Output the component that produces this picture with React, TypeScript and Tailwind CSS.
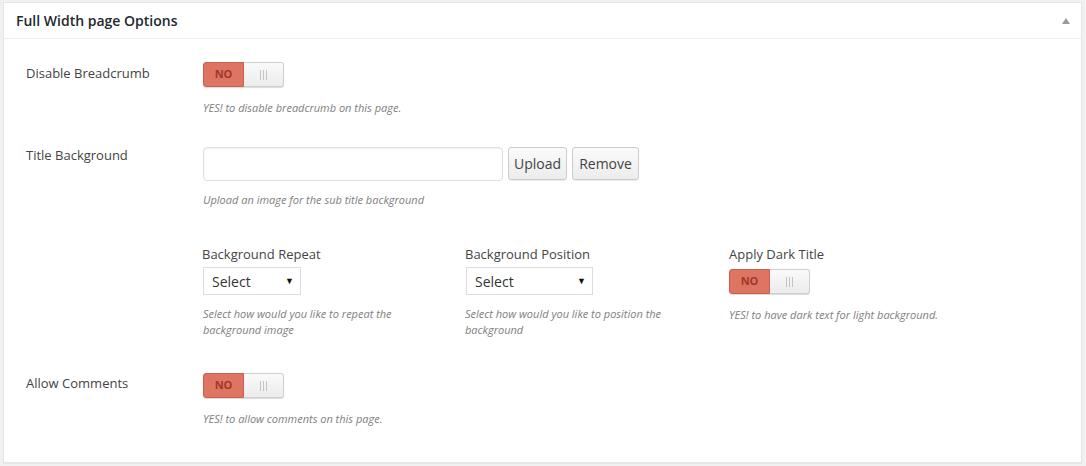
import React from 'react';

const font = { fontFamily: '"Open Sans", "Liberation Sans", sans-serif' };

const Toggle: React.FC = () => (
  <div className="flex h-[25px] w-[81px] rounded-[3px] shadow-[0_1px_1px_rgba(0,0,0,0.15)]">
    <div className="flex w-[41px] items-center justify-center rounded-l-[3px] border border-[#c9604f] bg-[#e07463] text-[11px] font-bold text-[#9c3a2d]">
      NO
    </div>
    <div className="flex flex-1 items-center justify-center gap-[2px] rounded-r-[3px] border border-l-0 border-[#cfcfcf] bg-gradient-to-b from-[#fafafa] to-[#ececec]">
      <span className="h-[10px] w-px bg-[#c4c4c4]"></span>
      <span className="h-[10px] w-px bg-[#c4c4c4]"></span>
      <span className="h-[10px] w-px bg-[#c4c4c4]"></span>
    </div>
  </div>
);

const Desc: React.FC<{ children: React.ReactNode; className?: string }> = ({ children, className = '' }) => (
  <p className={`text-[11px] italic leading-[16px] text-[#808080] ${className}`}>{children}</p>
);

const Select: React.FC<{ width: string }> = ({ width }) => (
  <div className={`flex h-[28px] ${width} items-center justify-between border border-[#dcdcdc] bg-white pl-[8px] pr-[6px] text-[14px] text-[#333]`}>
    <span>Select</span>
    <span className="text-[9px] text-[#111]">▼</span>
  </div>
);

const Btn: React.FC<{ children: React.ReactNode; w: string }> = ({ children, w }) => (
  <button className={`flex h-[33px] ${w} items-center justify-center rounded-[3px] border border-[#cccccc] bg-gradient-to-b from-[#fbfbfb] to-[#ececec] text-[14px] text-[#444] shadow-[0_1px_0_rgba(0,0,0,0.08)]`}>
    {children}
  </button>
);

export default function App() {
  return (
    <div className="h-[466px] w-[1086px] bg-[#f1f1f1] pl-[3px] pr-[4px] pt-[2px]" style={font}>
      <div className="h-[461px] border border-[#e5e5e5] bg-white shadow-[0_1px_1px_rgba(0,0,0,0.04)]">
        {/* header */}
        <div className="flex h-[36px] items-center justify-between border-b border-[#eeeeee] pl-[12px] pr-[11px]">
          <h2 className="text-[14px] font-semibold text-[#23282d]">Full Width page Options</h2>
          <span className="h-0 w-0 border-x-[4px] border-b-[6px] border-x-transparent border-b-[#9a9a9a]"></span>
        </div>

        <div className="pl-[22px]">
          {/* Disable Breadcrumb */}
          <div className="flex pt-[23px]">
            <div className="w-[177px] pt-[1px] text-[13px] leading-[20px] text-[#444]">Disable Breadcrumb</div>
            <div>
              <Toggle />
              <Desc className="mt-[13px]">YES! to disable breadcrumb on this page.</Desc>
            </div>
          </div>

          {/* Title Background */}
          <div className="flex pt-[31px]">
            <div className="mt-[1px] w-[177px] text-[13px] leading-[14px] text-[#444]">Title Background</div>
            <div>
              <div className="flex gap-[5px]">
                <div className="h-[34px] w-[300px] rounded-[4px] border border-[#dddddd] bg-white shadow-[inset_0_1px_2px_rgba(0,0,0,0.05)]"></div>
                <Btn w="w-[59px]">Upload</Btn>
                <Btn w="w-[67px]">Remove</Btn>
              </div>
              <Desc className="mt-[11px]">Upload an image for the sub title background</Desc>

              <div className="mt-[36px] grid w-[790px] grid-cols-[262px_264px_264px]">
                <div>
                  <div className="-ml-[1px] text-[13px] leading-[20px] text-[#444]">Background Repeat</div>
                  <div className="mt-[3px]"><Select width="w-[98px]" /></div>
                  <Desc className="mt-[11px] w-[220px]">Select how would you like to repeat the background image</Desc>
                </div>
                <div>
                  <div className="text-[13px] leading-[20px] text-[#444]">Background Position</div>
                  <div className="ml-[1px] mt-[3px]"><Select width="w-[127px]" /></div>
                  <Desc className="mt-[11px] w-[220px]">Select how would you like to position the background</Desc>
                </div>
                <div>
                  <div className="text-[13px] leading-[20px] text-[#444]">Apply Dark Title</div>
                  <div className="mt-[5px]"><Toggle /></div>
                  <Desc className="mt-[13px]">YES! to have dark text for light background.</Desc>
                </div>
              </div>
            </div>
          </div>

          {/* Allow Comments */}
          <div className="flex pt-[35px]">
            <div className="w-[177px] text-[13px] leading-[20px] text-[#444]">Allow Comments</div>
            <div>
              <Toggle />
              <Desc className="mt-[13px]">YES! to allow comments on this page.</Desc>
            </div>
          </div>
        </div>
      </div>
    </div>
  );
}
